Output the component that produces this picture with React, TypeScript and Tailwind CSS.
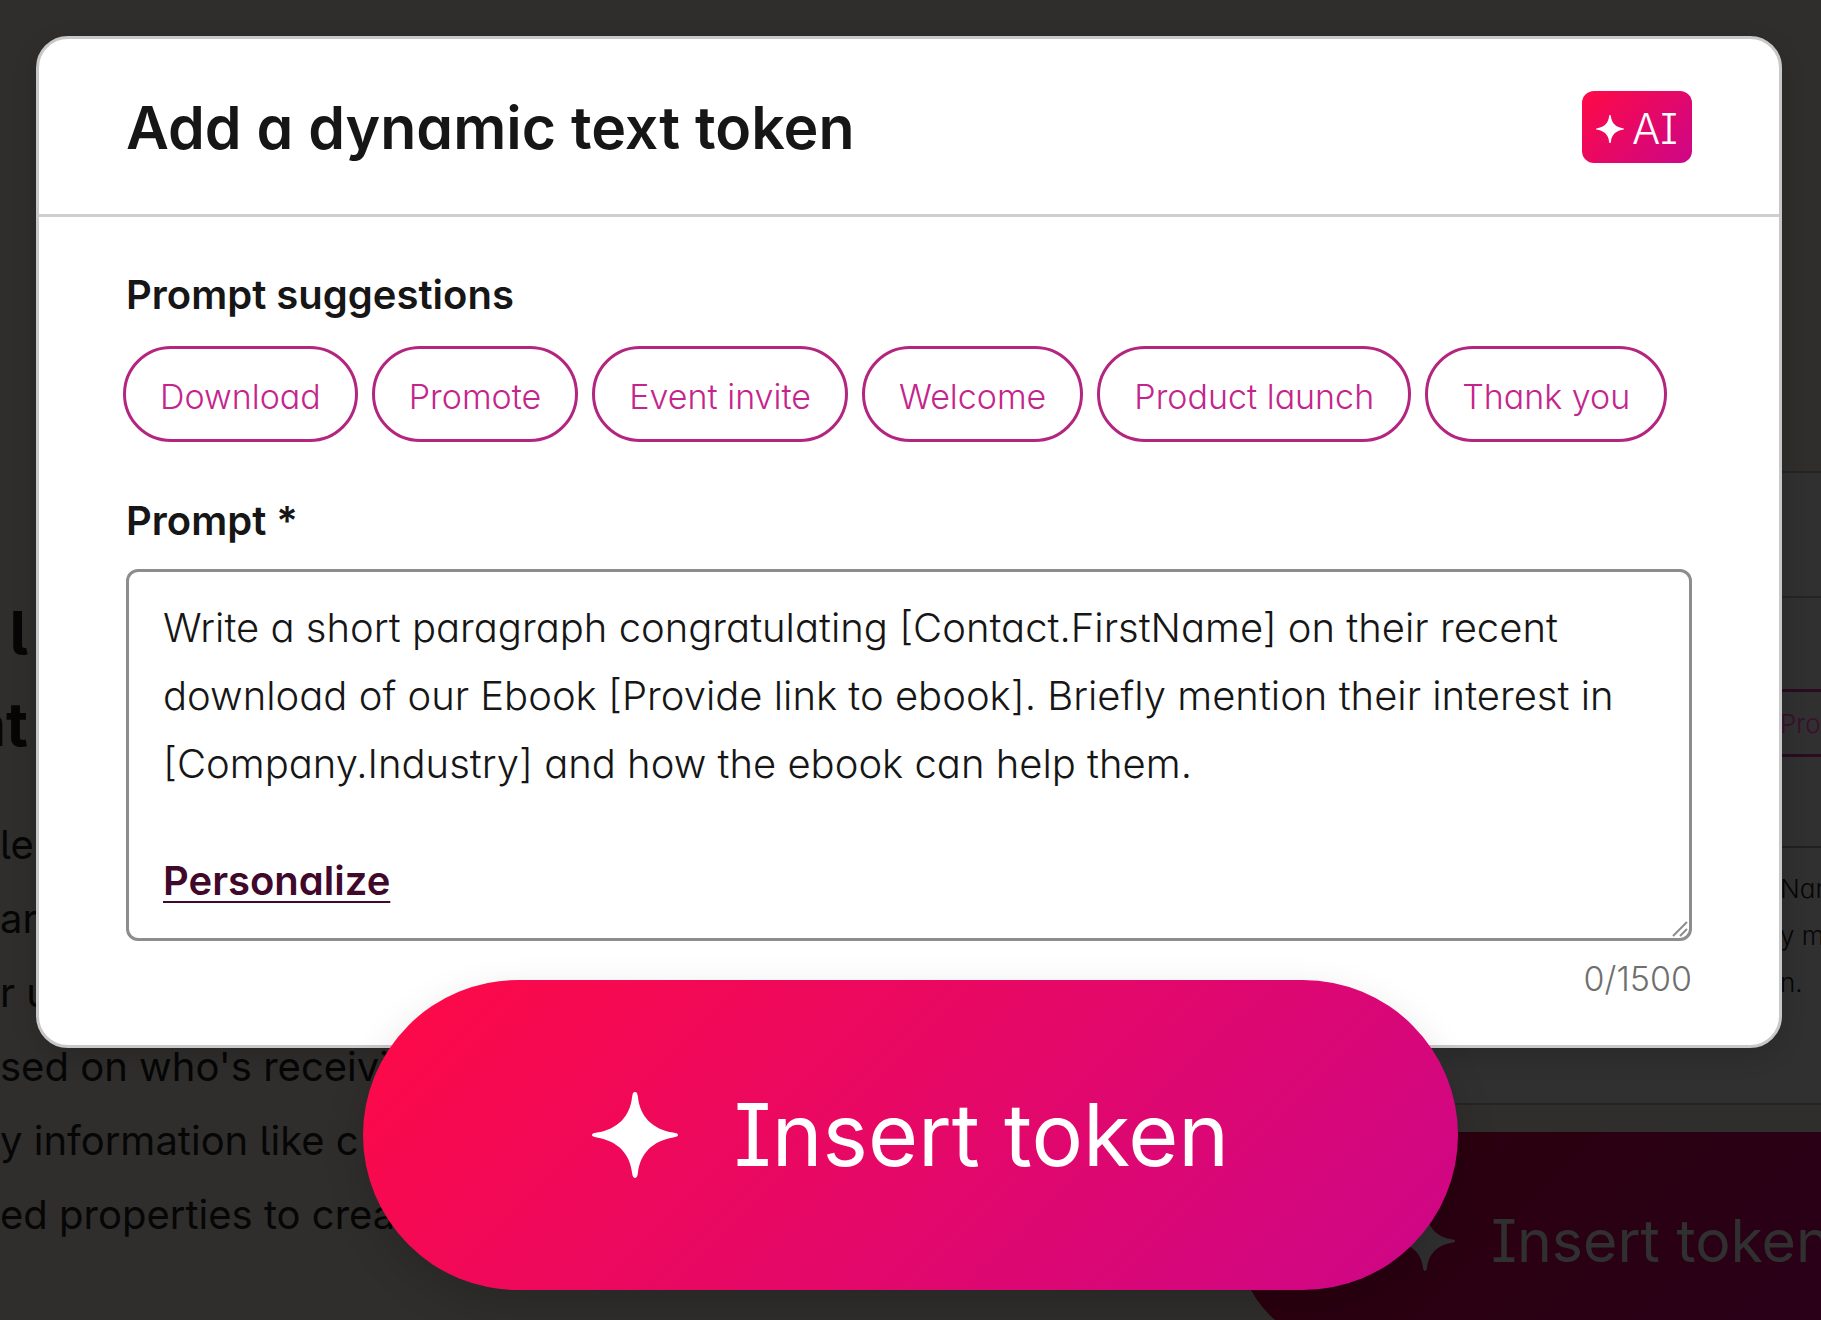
import { ReactNode } from "react"

const SUGGESTIONS = ["Download", "Promote", "Event invite", "Welcome", "Product launch", "Thank you"]

const PROMPT =
  "Write a short paragraph congratulating [Contact.FirstName] on their recent download of our Ebook [Provide link to ebook]. Briefly mention their interest in [Company.Industry] and how the ebook can help them."

function Sparkle({ className }: { className: string }) {
  return (
    <svg viewBox="0 0 88 88" className={className} fill="currentColor" aria-hidden="true">
      <path d="M44 0C46 0 46.500 2 47 5C49 25 62 38 83 41.500C86 42 88 42.500 88 44C88 45.500 86 46 83 46.500C62 50 49 63 47 83C46.500 86 46 88 44 88C42 88 41.500 86 41 83C39 63 26 50 5 46.500C2 46 0 45.500 0 44C0 42.500 2 42 5 41.500C26 38 39 25 41 5C41.500 2 42 0 44 0Z" />
    </svg>
  )
}

function Chip({ children }: { children: ReactNode }) {
  return (
    <button
      type="button"
      className="h-24 rounded-full border-[3px] border-[#b3257f] px-[34px] pt-1 text-[34px] font-light whitespace-nowrap text-[#c4258c]"
    >
      {children}
    </button>
  )
}

// dimmed page that sits behind the dialog
function Backdrop() {
  return (
    <div aria-hidden="true" className="absolute inset-0 overflow-hidden text-[#060606]">
      <div className="absolute top-[588px] left-0 w-[420px] whitespace-nowrap [font-feature-settings:'cv05']">
        <div className="flex w-7 flex-col items-end text-[60px] leading-[91px] font-bold">
          <span>l</span>
          <span>at</span>
        </div>
        <div className="mt-[38px] text-[40px] leading-[74px]">
          <p>ler</p>
          <p>ar</p>
          <p>r u</p>
          <p>sed on who's receiving</p>
          <p>y information like c</p>
          <p>ed properties to create</p>
        </div>
      </div>

      <div className="absolute top-[471px] right-0 h-[634px] w-[600px] border-y-2 border-[#242424] bg-[#303030]">
        <div className="mt-[123px] border-t-2 border-[#242424]" />
        <div className="mt-[91px] flex h-[68px] items-center border-y-[3px] border-[#2a0b20] pl-[559px] text-[26px] font-light text-[#3a0f2e]">
          Proc
        </div>
        <div className="mt-[89px] border-t-2 border-[#202020]" />
        <div className="mt-[17px] ml-[559px] text-[26px] leading-[47px] font-light whitespace-nowrap">
          <p>Nan</p>
          <p>y m</p>
          <p>n.</p>
        </div>
      </div>

      <div className="absolute top-[1132px] left-[1238px] flex h-[214px] w-[755px] items-center gap-9 rounded-full bg-linear-135/srgb from-[#2b000b] to-[#29001c] pt-1 pl-[157px] text-[59px] text-[#303030] [font-feature-settings:'cv08']">
        <Sparkle className="size-[60px]" />
        <span>Insert token</span>
      </div>
    </div>
  )
}

export default function App() {
  return (
    <div className="relative min-h-screen overflow-hidden bg-[#2f2e2c] px-9 pt-9 pb-[30px] font-['Inter',sans-serif] text-[#161616] [font-feature-settings:'cv11']">
      <Backdrop />

      <main
        role="dialog"
        aria-labelledby="dialog-title"
        className="relative mr-[3px] rounded-[32px] border-[3px] border-[#c8c8c8] bg-white pb-[42px] shadow-[0_8px_24px_rgba(0,0,0,0.15)]"
      >
        <header className="flex h-[178px] items-center justify-between border-b-[3px] border-[#cfcfcf] px-[87px]">
          <h1 id="dialog-title" className="pt-1 text-[59px] font-semibold">
            Add a dynamic text token
          </h1>
          <span className="flex h-[72px] w-[110px] items-center justify-center gap-2 rounded-xl bg-linear-135/srgb from-[#ff0a45] to-[#cc0688] pt-1 text-[42px] font-light text-white [font-feature-settings:'cv08']">
            <Sparkle className="size-7" />
            AI
          </span>
        </header>

        <div className="px-[87px] pt-[54px]">
          <h2 className="text-[40px] leading-[48px] font-semibold">Prompt suggestions</h2>
          <div className="-ml-[3px] mt-[27px] flex flex-wrap gap-[14px]">
            {SUGGESTIONS.map((label) => (
              <Chip key={label}>{label}</Chip>
            ))}
          </div>

          <label htmlFor="prompt" className="mt-[55px] block text-[40px] leading-[48px] font-semibold">
            Prompt *
          </label>
          <div className="relative mt-[24px] h-[372px] rounded-xl border-[3px] border-[#8d8d8d] px-[34px] pt-[22px]">
            <textarea
              id="prompt"
              defaultValue={PROMPT}
              className="block h-[204px] w-full resize-none overflow-hidden text-[40px] leading-[68px] font-light outline-none"
            />
            <a
              href="#personalize"
              className="mt-[49px] block w-fit text-[40px] leading-[68px] font-semibold text-[#40082b] underline decoration-2 underline-offset-[6px]"
            >
              Personalize
            </a>
            <svg viewBox="0 0 18 18" className="absolute right-0 bottom-0 size-[18px]" stroke="#8d8d8d" strokeWidth="2" fill="none">
              <path d="M2 16L16 2M9 16L16 9" />
            </svg>
          </div>
          <p className="mt-[16px] mb-[2px] text-right text-[34px] leading-[44px] font-light text-[#6f6f6f]">0/1500</p>
        </div>
      </main>

      <button
        type="button"
        className="relative mx-auto -mt-[68px] flex h-[310px] w-[1095px] items-center justify-center gap-14 rounded-full bg-linear-135/srgb from-[#ff0a45] to-[#cc0688] text-[86px] text-white shadow-[0_16px_40px_rgba(0,0,0,0.15)] [font-feature-settings:'cv08']"
      >
        <Sparkle className="size-[86px]" />
        Insert token
      </button>
    </div>
  )
}
